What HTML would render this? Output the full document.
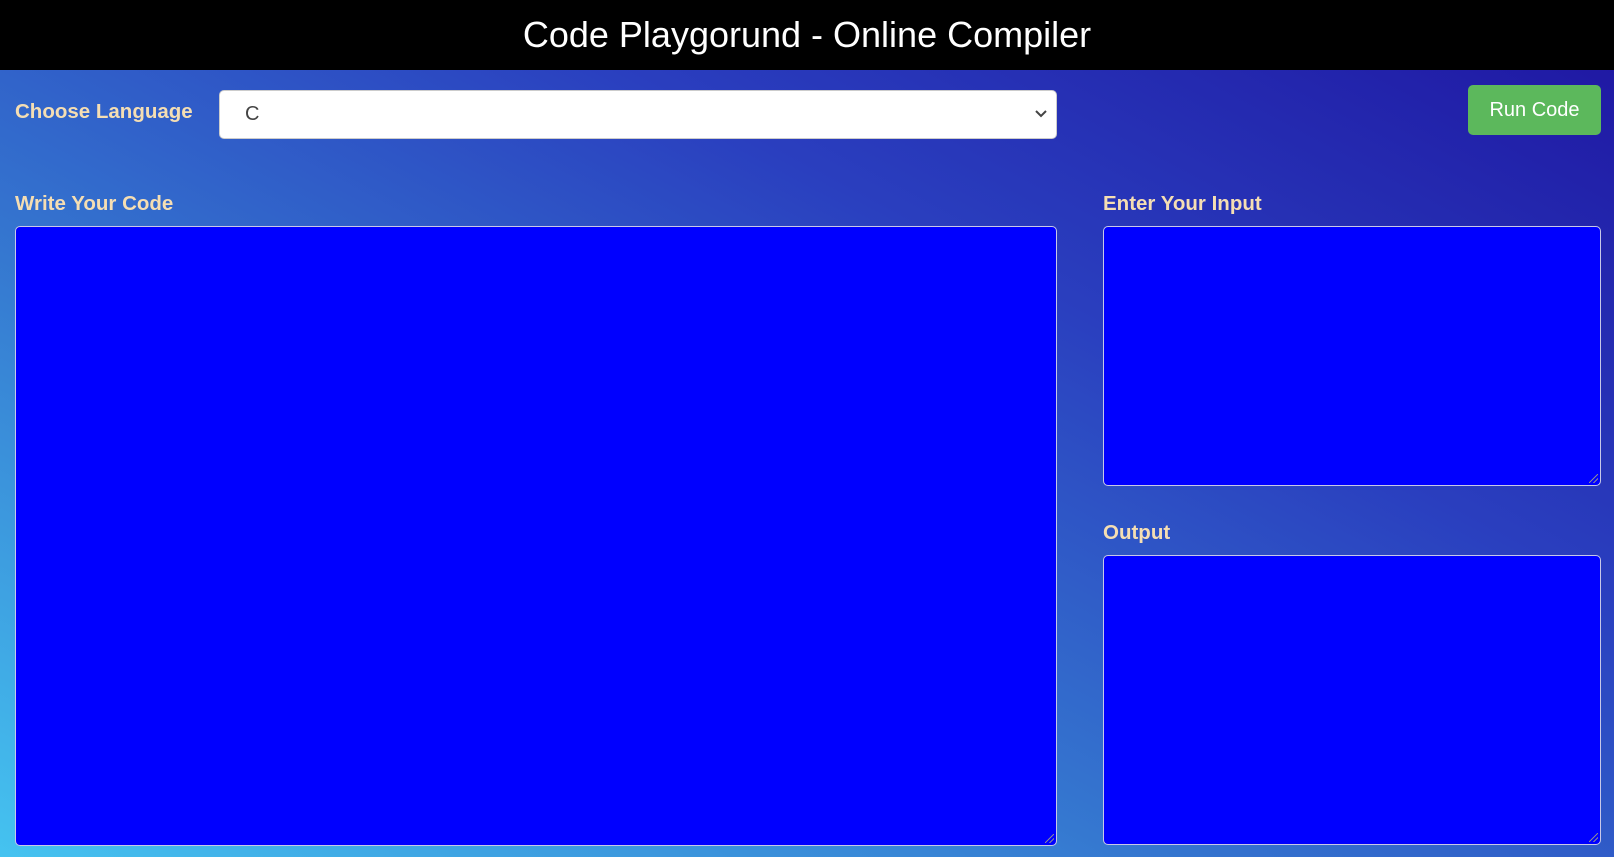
<!DOCTYPE html>
<html><head><style>
*{box-sizing:border-box;margin:0;padding:0}
body{width:1614px;height:857px;overflow:hidden;font-family:"Liberation Sans",Arial,sans-serif;background:linear-gradient(to top right,#45c3f0 0%,#3578d0 35%,#2a3fbf 65%,#1e14a0 100%);position:relative}
.hdr{position:absolute;left:0;top:0;width:1614px;height:70px;background:#000;color:#fff;font-size:36px;text-align:center;line-height:70px}
.lbl{position:absolute;color:#f5deb3;font-weight:bold;font-size:20.5px}
.sel{position:absolute;left:219px;top:90px;width:838px;height:49px;background:#fff;border:1px solid #ccc;border-radius:5px;font-size:20px;color:#444;padding-left:25px;line-height:47px}
.sel svg{position:absolute;right:8px;top:18px}
.btn{position:absolute;left:1468px;top:85px;width:133px;height:50px;background:#5cb85c;border-radius:5px;color:#fff;font-size:20px;text-align:center;line-height:50px}
.ta{position:absolute;background:#00f;border:1px solid #c8c8e8;border-radius:5px}
.ta:after{content:"";position:absolute;right:2px;bottom:2px;width:9px;height:9px;background:linear-gradient(135deg,transparent 45%,#889 45%,#889 55%,transparent 55%,transparent 70%,#889 70%,#889 80%,transparent 80%)}
</style></head><body>
<div class="hdr">Code Playgorund - Online Compiler</div>
<div class="lbl" style="left:15px;top:100px">Choose Language</div>
<div class="sel">C<svg width="14" height="10" viewBox="0 0 14 10"><path d="M2 2l5 5 5-5" stroke="#444" stroke-width="2" fill="none"/></svg></div>
<div class="btn">Run Code</div>
<div class="lbl" style="left:15px;top:192px">Write Your Code</div>
<div class="ta" style="left:15px;top:226px;width:1042px;height:620px"></div>
<div class="lbl" style="left:1103px;top:192px">Enter Your Input</div>
<div class="ta" style="left:1103px;top:226px;width:498px;height:260px"></div>
<div class="lbl" style="left:1103px;top:521px">Output</div>
<div class="ta" style="left:1103px;top:555px;width:498px;height:290px"></div>
</body></html>
